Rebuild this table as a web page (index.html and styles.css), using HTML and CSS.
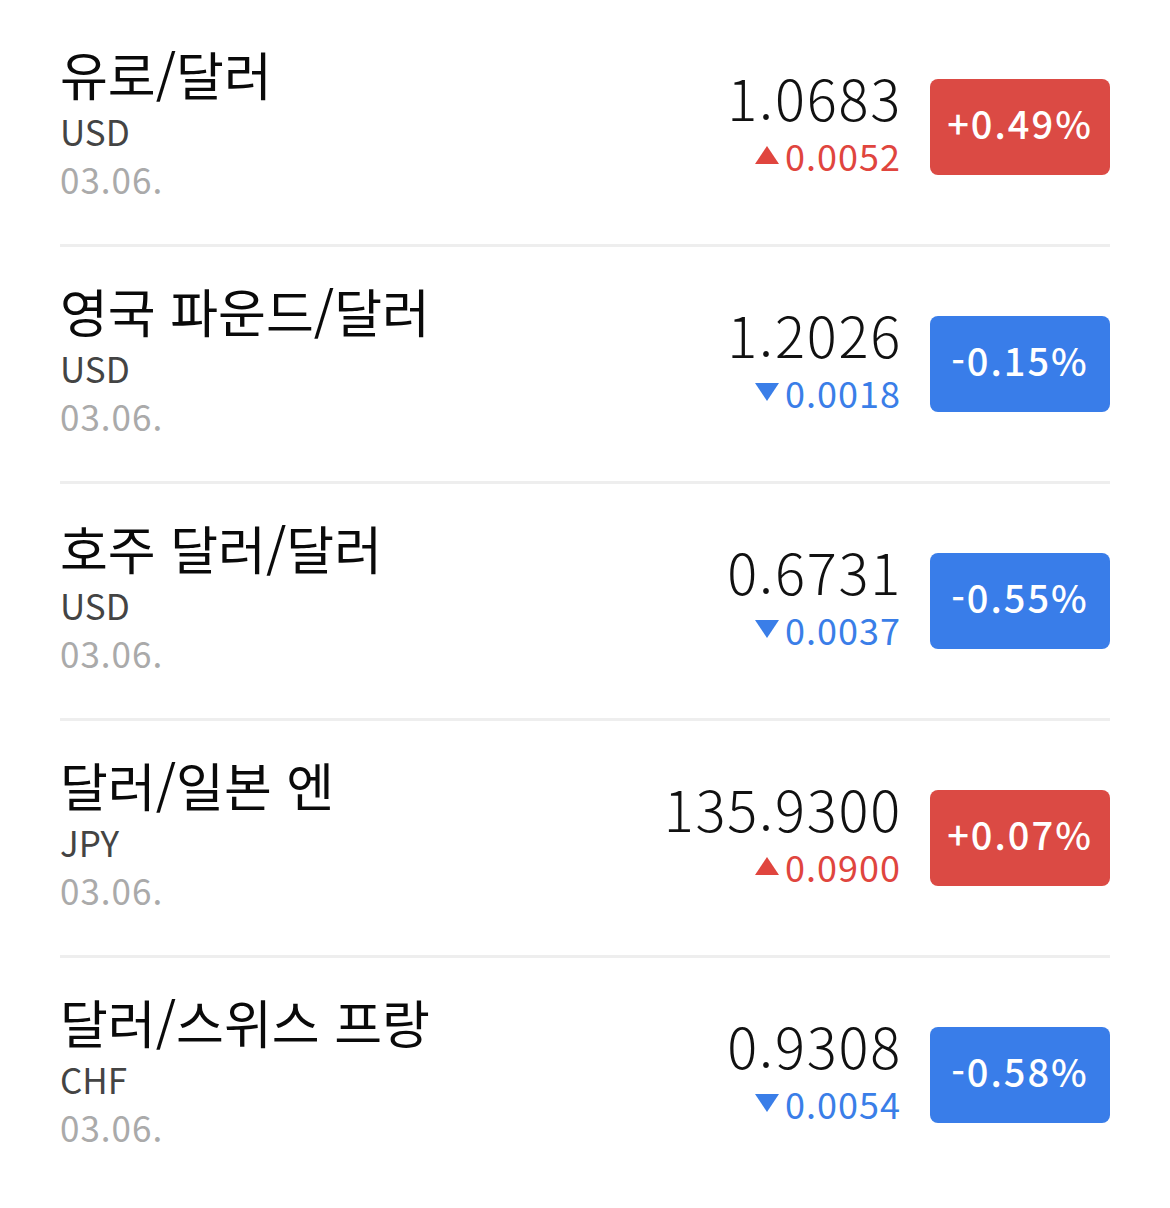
FILE: index.html
```html
<!DOCTYPE html>
<html lang="ko">
<head>
<meta charset="utf-8">
<link rel="stylesheet" href="styles.css">
</head>
<body>
<ul class="list">
  <li class="row">
    <div class="info">
      <div class="name">유로/달러</div>
      <div class="unit">USD</div>
      <div class="date">03.06.</div>
    </div>
    <div class="quote">
      <div class="price">1.0683</div>
      <div class="change up"><svg class="tri" viewBox="0 0 24 18"><path d="M12 0L24 18H0Z"/></svg>0.0052</div>
    </div>
    <div class="badge up">+0.49%</div>
  </li>
  <li class="row">
    <div class="info">
      <div class="name">영국 파운드/달러</div>
      <div class="unit">USD</div>
      <div class="date">03.06.</div>
    </div>
    <div class="quote">
      <div class="price">1.2026</div>
      <div class="change down"><svg class="tri" viewBox="0 0 24 18"><path d="M0 0H24L12 18Z"/></svg>0.0018</div>
    </div>
    <div class="badge down">-0.15%</div>
  </li>
  <li class="row">
    <div class="info">
      <div class="name">호주 달러/달러</div>
      <div class="unit">USD</div>
      <div class="date">03.06.</div>
    </div>
    <div class="quote">
      <div class="price">0.6731</div>
      <div class="change down"><svg class="tri" viewBox="0 0 24 18"><path d="M0 0H24L12 18Z"/></svg>0.0037</div>
    </div>
    <div class="badge down">-0.55%</div>
  </li>
  <li class="row">
    <div class="info">
      <div class="name">달러/일본 엔</div>
      <div class="unit">JPY</div>
      <div class="date">03.06.</div>
    </div>
    <div class="quote">
      <div class="price">135.9300</div>
      <div class="change up"><svg class="tri" viewBox="0 0 24 18"><path d="M12 0L24 18H0Z"/></svg>0.0900</div>
    </div>
    <div class="badge up">+0.07%</div>
  </li>
  <li class="row">
    <div class="info">
      <div class="name">달러/스위스 프랑</div>
      <div class="unit">CHF</div>
      <div class="date">03.06.</div>
    </div>
    <div class="quote">
      <div class="price">0.9308</div>
      <div class="change down"><svg class="tri" viewBox="0 0 24 18"><path d="M0 0H24L12 18Z"/></svg>0.0054</div>
    </div>
    <div class="badge down">-0.58%</div>
  </li>
</ul>
</body>
</html>
```
FILE: styles.css
```css
* { box-sizing: border-box; }
html, body {
  margin: 0;
  padding: 0;
  background: #fff;
  font-family: "Noto Sans CJK KR", "Noto Sans", sans-serif;
}
.list {
  list-style: none;
  margin: 0;
  padding: 10px 60px 0;
}
.row {
  display: flex;
  align-items: center;
  height: 237px;
  border-bottom: 3px solid #eeeeee;
}
.row:last-child { border-bottom: none; height: 234px; }
.info {
  flex: 1;
  display: flex;
  flex-direction: column;
  padding-bottom: 11px;
}
.name {
  font-size: 52px;
  line-height: 67px;
  color: #0a0a0a;
}
.unit {
  font-size: 35px;
  line-height: 48px;
  color: #444;
}
.date {
  font-size: 35px;
  line-height: 48px;
  color: #aaa;
  letter-spacing: 1px;
}
.quote {
  display: flex;
  flex-direction: column;
  align-items: flex-end;
  margin-right: 30px;
  padding-bottom: 16px;
}
.price {
  font-size: 56px;
  line-height: 72px;
  color: #111;
  font-weight: 300;
  letter-spacing: 1.8px;
  margin-right: -2px;
}
.change {
  display: flex;
  align-items: center;
  gap: 6px;
  font-size: 36px;
  line-height: 44px;
  letter-spacing: 1px;
  margin-right: -1px;
}
.tri { width: 24px; height: 18px; fill: currentColor; }
.change.up { color: #e0453e; }
.change.down { color: #3a7ee8; }
.badge {
  width: 180px;
  height: 96px;
  border-radius: 8px;
  display: flex;
  align-items: center;
  justify-content: center;
  padding-bottom: 10px;
  color: #fff;
  font-size: 38px;
  font-weight: 500;
  letter-spacing: 2px;
}
.badge.up { background: #db4a44; }
.badge.down { background: #397de9; }
```
